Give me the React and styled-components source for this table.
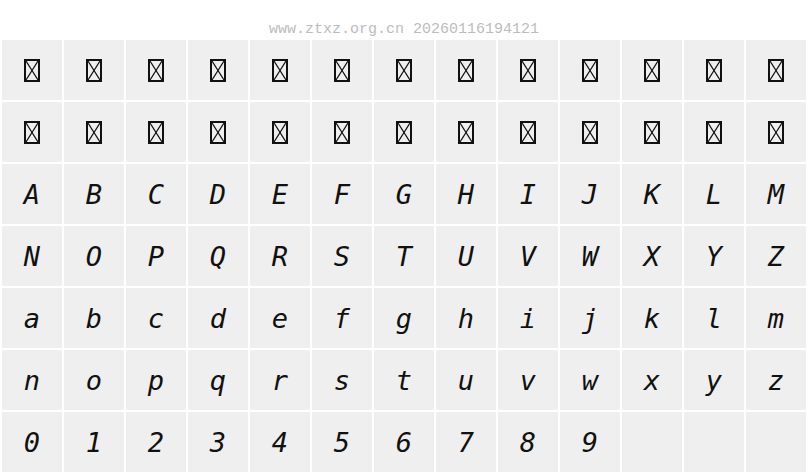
import React from "react";
import styled, { createGlobalStyle } from "styled-components";

const Global = createGlobalStyle`
  html, body { margin: 0; padding: 0; background: #ffffff; }
`;

const Page = styled.div`
  width: 808px;
`;

const Header = styled.div`
  height: 38px;
  box-sizing: border-box;
  padding-top: 21px;
  text-align: center;
  font-family: "Liberation Mono", "DejaVu Sans Mono", monospace;
  font-size: 15px;
  line-height: 17px;
  color: #bcbcbc;
`;

const Grid = styled.div`
  display: grid;
  grid-template-columns: repeat(13, 60px);
  grid-auto-rows: 60px;
  gap: 2px;
  padding: 2px;
`;

const Cell = styled.div`
  background: #efefef;
  display: flex;
  align-items: center;
  justify-content: center;
  font-family: "DejaVu Sans Mono", monospace;
  font-style: italic;
  font-size: 27px;
  line-height: 1;
  color: #111;
`;

const Tofu = () => (
  <svg width="16" height="23" viewBox="0 0 16 23">
    <rect x="1" y="1" width="14" height="21" fill="none" stroke="#111" strokeWidth="2" />
    <line x1="2" y1="2" x2="14" y2="21" stroke="#111" strokeWidth="1.3" />
    <line x1="14" y1="2" x2="2" y2="21" stroke="#111" strokeWidth="1.3" />
  </svg>
);

const rows = [
  "ABCDEFGHIJKLMNOPQRSTUVWXYZ",
  "abcdefghijklmnopqrstuvwxyz",
  "0123456789",
];

export default function App() {
  const tofus = Array.from({ length: 26 });
  const chars = rows.join("").split("");
  const empties = Array.from({ length: 3 });
  return (
    <Page>
      <Global />
      <Header>www.ztxz.org.cn 20260116194121</Header>
      <Grid>
        {tofus.map((_, i) => (
          <Cell key={"t" + i}>
            <Tofu />
          </Cell>
        ))}
        {chars.map((c, i) => (
          <Cell key={"c" + i}>{c}</Cell>
        ))}
        {empties.map((_, i) => (
          <Cell key={"e" + i} />
        ))}
      </Grid>
    </Page>
  );
}
